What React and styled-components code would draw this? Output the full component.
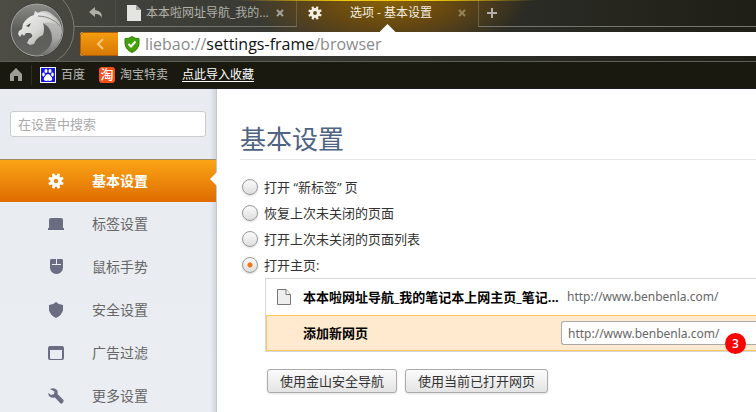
import React, { useState } from 'react';
import styled, { createGlobalStyle, css } from 'styled-components';

const GlobalStyle = createGlobalStyle`
  *, *::before, *::after { box-sizing: border-box; }
  html, body, #root { height: 100%; }
  body {
    margin: 0;
    overflow: hidden;
    background: #fff;
    color: #333;
    font: 13px/20px "Open Sans", "Noto Sans CJK SC", sans-serif;
  }
  button, input { font: inherit; color: inherit; }
  button { cursor: pointer; }
`;

const Window = styled.div`
  display: flex;
  flex-direction: column;
  min-height: 100%;
`;

/* ---------- browser frame ---------- */

const Frame = styled.header`
  display: grid;
  grid-template-columns: 80px minmax(0, 1fr);
  background:
    radial-gradient(ellipse 140px 56px at 388px 0, #876208 0%, rgba(112, 76, 12, 0.85) 45%, rgba(80, 60, 20, 0) 100%),
    linear-gradient(90deg, #4d4d46 0, #41413b 130px, #2c2d26 500px, #1e1e17 100%);
  border-bottom: 1px solid #5c5d56;
`;

const LogoButton = styled.button`
  display: block;
  padding: 0;
  border: 0;
  background: none;
  svg { display: block; }
`;

const FrameBars = styled.div`
  padding-bottom: 5px;
`;

const TabBar = styled.div`
  display: flex;
  height: 32px;
`;

const barCell = css`
  display: flex;
  align-items: center;
  height: 27px;
  border: 0;
  border-bottom: 1px solid #74756c;
  background: none;
  color: #b0b0a9;
`;

const BackButton = styled.button`
  ${barCell}
  width: 36px;
  padding: 0 0 0 8px;
  border-right: 1px solid #4b4b44;
`;

const NewTabButton = styled.button`
  ${barCell}
  flex: 1;
  padding: 0 8px;
  border-left: 1px solid #6b6243;
`;

const Tab = styled.div`
  ${barCell}
  position: relative;
  width: 181px;
  padding: 0 10px 0 11px;
  color: ${(p) => (p.$active ? '#f4efe2' : '#b0b0a9')};
  ${(p) =>
    p.$active
      ? css`
          border-bottom-color: transparent;
          &::before {
            content: '';
            position: absolute;
            inset: 0 -60px auto;
            height: 1px;
            background: linear-gradient(90deg, transparent, #f0c810 35%, #f0c810 65%, transparent);
          }
          &::after {
            content: '';
            position: absolute;
            left: 50%;
            top: 24px;
            width: 16px;
            height: 8px;
            margin-left: -8px;
            background: #fff;
            clip-path: polygon(50% 0, 100% 100%, 0 100%);
          }
        `
      : css`
          border-right: 1px solid #6b6243;
        `}
`;

const TabTitle = styled.span`
  flex: 1;
  min-width: 0;
  margin: 0 1px 0 5px;
  overflow: hidden;
  white-space: nowrap;
  font-size: 12px;
  text-align: ${(p) => (p.$centered ? 'center' : 'left')};
`;

const CloseButton = styled.button`
  display: flex;
  padding: 2px;
  border: 0;
  background: none;
  color: ${(p) => (p.$active ? '#96835a' : '#a3a39c')};
`;

const AddressBar = styled.div`
  display: flex;
  align-items: stretch;
  height: 24px;
  border-radius: 3px 0 0 3px;
  background: #fff;
  overflow: hidden;
`;

const HistoryButton = styled.button`
  display: flex;
  align-items: center;
  justify-content: center;
  width: 38px;
  padding: 0;
  border: 1px solid #a86008;
  border-right: 0;
  border-radius: 3px 0 0 3px;
  background: linear-gradient(#f39c10, #d97803);
  color: #f9c67c;
`;

const Address = styled.div`
  display: flex;
  flex: 1;
  align-items: center;
  gap: 5px;
  padding-left: 6px;
  font-size: 16px;
  line-height: 24px;
  white-space: nowrap;
  color: #8a8a8a;
  b { font-weight: 400; color: #111; }
`;

const BookmarkBar = styled.nav`
  display: flex;
  align-items: center;
  gap: 14px;
  height: 27px;
  padding-left: 9px;
  border-bottom: 1px solid #1a1a20;
  background: #191910;
  font-size: 12px;
`;

const HomeGroup = styled.div`
  display: flex;
  align-items: center;
  gap: 8px;
`;

const HomeLink = styled.a`
  display: flex;
  align-items: center;
  height: 20px;
  padding-right: 8px;
  border-right: 1px solid #2e2e27;
  color: #9d9d98;
`;

const Bookmark = styled.a`
  display: flex;
  align-items: center;
  gap: 5px;
  color: ${(p) => (p.$underlined ? '#fff' : '#b9b9b4')};
  text-decoration: ${(p) => (p.$underlined ? 'underline' : 'none')};
  text-underline-offset: 2px;
`;

/* ---------- settings page ---------- */

const Page = styled.div`
  display: grid;
  flex: 1;
  grid-template-columns: 217px minmax(0, 1fr);
`;

const Sidebar = styled.aside`
  padding-top: 22px;
  border-right: 1px solid #c3c6cb;
  background:
    linear-gradient(270deg, rgba(200, 205, 212, 0.7), rgba(220, 224, 230, 0) 6px),
    linear-gradient(#e8ebf0, #eaeef3);
`;

const SearchInput = styled.input`
  display: block;
  width: calc(100% - 20px);
  height: 26px;
  margin: 0 10px 22px;
  padding: 0 7px;
  border: 1px solid #ccc;
  border-radius: 3px;
  background: #fff;
  &::placeholder { color: #aaa; opacity: 1; }
`;

const MenuItem = styled.a`
  position: relative;
  display: flex;
  align-items: center;
  gap: 28px;
  height: 43px;
  padding-left: 48px;
  font-size: 14px;
  text-decoration: none;
  color: #666;
  svg { display: block; color: #6b6d82; }
  ${(p) =>
    p.$active &&
    css`
      border-top: 1px solid #a18a5c;
      background: linear-gradient(#fba416, #de6c00);
      color: #fff;
      font-weight: 700;
      svg { color: #fff; }
      &::after {
        content: '';
        position: absolute;
        right: -1px;
        top: 12px;
        width: 7px;
        height: 14px;
        background: #fff;
        clip-path: polygon(0 50%, 100% 0, 100% 100%);
      }
    `}
`;

const Content = styled.main`
  padding: 30px 0 0 23px;
`;

const Title = styled.h1`
  margin: 0 0 14px;
  border-bottom: 1px solid #e8e8e8;
  color: #4f6383;
  font-size: 26px;
  font-weight: 400;
  line-height: 40px;
`;

const Options = styled.fieldset`
  margin: 0;
  padding: 0 0 0 2px;
  border: 0;
  min-width: 0;
`;

const Option = styled.label`
  display: flex;
  align-items: center;
  gap: 6px;
  height: 26px;
`;

const Radio = styled.input`
  appearance: none;
  width: 16px;
  height: 16px;
  margin: 0;
  border: 1px solid #999;
  border-radius: 50%;
  background: linear-gradient(#fbfbfb, #dedede);
  box-shadow: 0 1px 2px rgba(0, 0, 0, 0.15);
  &:checked {
    background:
      radial-gradient(circle, #ee7414 2px, transparent 3px),
      linear-gradient(#fbfbfb, #dedede);
  }
`;

const PageList = styled.ul`
  margin: 0 0 0 25px;
  padding: 0;
  border: 1px solid #d8d8d8;
  border-right: 0;
  list-style: none;
`;

const PageRow = styled.li`
  display: flex;
  align-items: center;
  height: 36px;
  padding-left: 10px;
  ${(p) =>
    p.$editing &&
    css`
      border: 1px solid #fdc760;
      border-right: 0;
      padding-left: 9px;
      background: #ffe9cf;
    `}
`;

const PageIcon = styled.span`
  width: 27px;
  svg { display: block; }
`;

const PageName = styled.strong`
  width: 258px;
  overflow: hidden;
  white-space: nowrap;
  color: #000;
`;

const urlText = css`
  font-family: "Noto Sans", "Noto Sans CJK SC", sans-serif;
  font-size: 12px;
  color: #666;
`;

const PageUrl = styled.span`
  ${urlText}
  padding-left: 6px;
`;

const UrlField = styled.div`
  position: relative;
  flex: 1;
`;

const UrlInput = styled.input`
  ${urlText}
  display: block;
  width: 100%;
  height: 24px;
  padding: 0 6px;
  border: 1px solid #aaa;
  border-right: 0;
  border-radius: 3px 0 0 3px;
  background: #fff;
`;

const StepBadge = styled.span`
  position: absolute;
  left: 164px;
  top: 12px;
  width: 21px;
  height: 21px;
  border-radius: 50%;
  background: #f00;
  color: #fff;
  font-size: 12px;
  font-weight: 600;
  line-height: 21px;
  text-align: center;
`;

const Actions = styled.div`
  display: flex;
  gap: 8px;
  padding: 17px 0 0 27px;
`;

const ActionButton = styled.button`
  height: 24px;
  padding: 0 12px;
  border: 1px solid #aaa;
  border-radius: 3px;
  background: linear-gradient(#fbfbfb, #e4e4e4);
  box-shadow: 0 1px 2px rgba(0, 0, 0, 0.12);
  line-height: 22px;
  white-space: nowrap;
  color: #333;
`;

/* ---------- icons ---------- */

const LeopardLogo = () => (
  <svg width="80" height="61" viewBox="0 0 80 61" aria-hidden="true">
    <defs>
      <linearGradient id="disc" x1="0" y1="0" x2="0" y2="1">
        <stop offset="0" stopColor="#8c8c89" />
        <stop offset="0.5" stopColor="#5c5c59" />
        <stop offset="1" stopColor="#62625f" />
      </linearGradient>
      <linearGradient id="cat" x1="0" y1="0" x2="1" y2="1">
        <stop offset="0" stopColor="#f4f4f4" />
        <stop offset="0.5" stopColor="#d8d8d7" />
        <stop offset="1" stopColor="#8a8a88" />
      </linearGradient>
      <linearGradient id="mane" x1="0" y1="0" x2="0" y2="1">
        <stop offset="0" stopColor="#c9c9c7" />
        <stop offset="0.6" stopColor="#a8a8a6" />
        <stop offset="1" stopColor="#70706d" />
      </linearGradient>
    </defs>
    <path d="M63 0Q74 12 74 29Q74 50 56 61" fill="none" stroke="#7b7b74" />
    <path d="M74 26.5H80" stroke="#74756c" />
    <circle cx="37" cy="30" r="27" fill="#33332f" />
    <circle cx="37" cy="30" r="26" fill="url(#disc)" stroke="#a8a8a4" />
    <path d="M37 13Q46 8 53 15Q62 21 62 32Q61 45 48 54Q43 56 38 55Q52 49 52 38Q52 28 43 23Z" fill="url(#mane)" />
    <path
      d="M35 11L38 13Q44 11 50 15Q57 20 60 26Q51 21 43 23Q45 29 43 35Q38 37 36 40Q35 42 34 44L30 45L27 43L29 39L32 37Q33 34 30 33L26 33L24 36L22 34L20 37L18 34L19 31L22 29L23 24Q27 17 34 15Z"
      fill="url(#cat)"
    />
    <path d="M26 26L31 23L29 27Z" fill="#4a4a47" />
    <path d="M38 16Q51 16 60 26" fill="none" stroke="#858583" />
  </svg>
);

const BackArrow = () => (
  <svg width="16" height="14" viewBox="0 0 16 14" fill="currentColor" aria-hidden="true">
    <path d="M7 1L1 6L7 11V8Q12 7.500 13.500 12Q15 5 7 4Z" />
  </svg>
);

const TabPage = () => (
  <svg width="14" height="16" viewBox="0 0 14 16" aria-hidden="true">
    <path d="M0 0H9L14 5V16H0Z" fill="#e4e4e2" />
    <path d="M9 0V5H14Z" fill="#9b9b98" />
  </svg>
);

const ListPage = () => (
  <svg width="16" height="17" viewBox="0 0 16 17" aria-hidden="true">
    <path d="M1.500 0.500H10L14.500 5.500V15.500H1.500Z" fill="#eee" stroke="#777" />
    <path d="M10 0.500V5.500H14.500" fill="#fff" stroke="#777" />
  </svg>
);

const gearTeeth = [0, 45, 90, 135, 180, 225, 270, 315];

const Gear = ({ size = 16 }) => (
  <svg width={size} height={size} viewBox="0 0 16 16" fill="currentColor" aria-hidden="true">
    {gearTeeth.map((angle) => (
      <path key={angle} d="M6.500 3L6.800 0.200H9.200L9.500 3Z" transform={`rotate(${angle + 22} 8 8)`} />
    ))}
    <path fillRule="evenodd" d="M8 2.300A5.700 5.700 0 1 0 8 13.700A5.700 5.700 0 1 0 8 2.300ZM8 5.800A2.200 2.200 0 1 1 8 10.200A2.200 2.200 0 1 1 8 5.800Z" />
  </svg>
);

const Cross = () => (
  <svg width="8" height="8" viewBox="0 0 8 8" stroke="currentColor" strokeWidth="2" aria-hidden="true">
    <path d="M1 1L7 7M7 1L1 7" />
  </svg>
);

const Plus = () => (
  <svg width="10" height="10" viewBox="0 0 10 10" stroke="currentColor" strokeWidth="2" aria-hidden="true">
    <path d="M5 0V10M0 5H10" />
  </svg>
);

const Chevron = () => (
  <svg width="8" height="12" viewBox="0 0 8 12" fill="none" stroke="currentColor" strokeWidth="2" aria-hidden="true">
    <path d="M7 1L2 6L7 11" />
  </svg>
);

const SafeShield = () => (
  <svg width="16" height="17" viewBox="0 0 16 17" aria-hidden="true">
    <path d="M8 0.500Q11 3 15 2.500V8Q14 14 8 16.500Q2 14 1 8V2.500Q5 3 8 0.500Z" fill="#44a008" stroke="#328206" />
    <path d="M4.500 8L7 10.500L11.500 5.500" fill="none" stroke="#fff" strokeWidth="2" />
  </svg>
);

const House = () => (
  <svg width="14" height="14" viewBox="0 0 14 14" fill="currentColor" aria-hidden="true">
    <path d="M7 0L13 6V13H9V8H5V13H1V6Z" />
  </svg>
);

const BaiduMark = () => (
  <svg width="16" height="16" viewBox="0 0 16 16" aria-hidden="true">
    <path d="M0 0H16V16H0Z" fill="#fff" />
    <path d="M1 1H15V15H1Z" fill="#1414e8" />
    <g fill="#fff">
      <ellipse cx="6" cy="4" rx="1.500" ry="2" />
      <ellipse cx="10" cy="4" rx="1.500" ry="2" />
      <ellipse cx="3.500" cy="7.500" rx="1.300" ry="2" />
      <ellipse cx="12.500" cy="7.500" rx="1.300" ry="2" />
      <path d="M8 7Q10 7 11 9.500Q13 11 12 13Q10 14.500 8 13.500Q6 14.500 4 13Q3 11 5 9.500Q6 7 8 7Z" />
    </g>
  </svg>
);

const TaobaoMark = styled.span`
  width: 16px;
  height: 16px;
  border-radius: 3px;
  background: #f0501a;
  color: #fff;
  font-size: 13px;
  font-weight: 500;
  line-height: 15px;
  text-align: center;
`;

const TabShape = () => (
  <svg width="16" height="16" viewBox="0 0 16 16" fill="currentColor" aria-hidden="true">
    <path d="M3 2H13Q15 2 15 4V12H16V14H0V12H1V4Q1 2 3 2Z" />
  </svg>
);

const MouseShape = () => (
  <svg width="16" height="16" viewBox="0 0 16 16" fill="currentColor" aria-hidden="true">
    <path d="M3 0H8V5H4V6H13V5H9V0H14Q15 0 15 2V9Q15 12 12 14Q8.500 16 5 14Q2 12 2 9V2Q2 0 3 0Z" />
  </svg>
);

const ShieldShape = () => (
  <svg width="16" height="16" viewBox="0 0 16 16" fill="currentColor" aria-hidden="true">
    <path d="M8 0Q11 3 15 3V8Q14 13 8 16Q2 13 1 8V3Q5 3 8 0Z" />
  </svg>
);

const WindowShape = () => (
  <svg width="16" height="16" viewBox="0 0 16 16" fill="currentColor" aria-hidden="true">
    <path fillRule="evenodd" d="M2 1H14Q16 1 16 3V13Q16 15 14 15H2Q0 15 0 13V3Q0 1 2 1ZM2 5V13Q2 14 3 14H13Q14 14 14 13V5Z" />
  </svg>
);

const WrenchShape = () => (
  <svg width="16" height="16" viewBox="0 0 16 16" fill="currentColor" aria-hidden="true">
    <path d="M2 1Q6 -1 9 2Q10 4 9.500 6L15.500 12Q16 14 14 15.500Q13 16 12 15L7 9.500Q3 10.500 1 8Q0 6 0.500 5L3 7L6 6L6.500 3.500Z" />
  </svg>
);

/* ---------- data ---------- */

const menu = [
  { label: '基本设置', Icon: Gear },
  { label: '标签设置', Icon: TabShape },
  { label: '鼠标手势', Icon: MouseShape },
  { label: '安全设置', Icon: ShieldShape },
  { label: '广告过滤', Icon: WindowShape },
  { label: '更多设置', Icon: WrenchShape },
];

const startupOptions = ['打开 “新标签” 页', '恢复上次未关闭的页面', '打开上次未关闭的页面列表', '打开主页:'];

export default function App() {
  const [section, setSection] = useState(0);
  const [startup, setStartup] = useState(3);
  const [url, setUrl] = useState('http://www.benbenla.com/');

  return (
    <Window>
      <GlobalStyle />
      <Frame>
        <LogoButton aria-label="猎豹浏览器">
          <LeopardLogo />
        </LogoButton>
        <FrameBars>
          <TabBar>
            <BackButton aria-label="恢复标签"><BackArrow /></BackButton>
            <Tab>
              <TabPage />
              <TabTitle>本本啦网址导航_我的...</TabTitle>
              <CloseButton aria-label="关闭"><Cross /></CloseButton>
            </Tab>
            <Tab $active>
              <Gear size={14} />
              <TabTitle $centered>选项 - 基本设置</TabTitle>
              <CloseButton $active aria-label="关闭"><Cross /></CloseButton>
            </Tab>
            <NewTabButton aria-label="新建标签"><Plus /></NewTabButton>
          </TabBar>
          <AddressBar>
            <HistoryButton aria-label="后退"><Chevron /></HistoryButton>
            <Address>
              <SafeShield />
              <span>liebao://<b>settings-frame</b>/browser</span>
            </Address>
          </AddressBar>
        </FrameBars>
      </Frame>
      <BookmarkBar>
        <HomeGroup>
          <HomeLink href="#home" aria-label="主页"><House /></HomeLink>
          <Bookmark href="#baidu"><BaiduMark />百度</Bookmark>
        </HomeGroup>
        <Bookmark href="#taobao"><TaobaoMark>淘</TaobaoMark>淘宝特卖</Bookmark>
        <Bookmark href="#import" $underlined>点此导入收藏</Bookmark>
      </BookmarkBar>
      <Page>
        <Sidebar>
          <SearchInput type="search" placeholder="在设置中搜索" aria-label="在设置中搜索" />
          <nav>
            {menu.map(({ label, Icon }, i) => (
              <MenuItem key={label} href="#settings" $active={i === section} onClick={() => setSection(i)}>
                <Icon />
                {label}
              </MenuItem>
            ))}
          </nav>
        </Sidebar>
        <Content>
          <Title>基本设置</Title>
          <Options aria-label="启动时">
            {startupOptions.map((label, i) => (
              <Option key={label}>
                <Radio type="radio" name="startup" checked={i === startup} onChange={() => setStartup(i)} />
                {label}
              </Option>
            ))}
          </Options>
          <PageList>
            <PageRow>
              <PageIcon><ListPage /></PageIcon>
              <PageName>本本啦网址导航_我的笔记本上网主页_笔记...</PageName>
              <PageUrl>http://www.benbenla.com/</PageUrl>
            </PageRow>
            <PageRow $editing>
              <PageIcon />
              <PageName as="label" htmlFor="new-page"><strong>添加新网页</strong></PageName>
              <UrlField>
                <UrlInput id="new-page" value={url} onChange={(e) => setUrl(e.target.value)} />
                <StepBadge>3</StepBadge>
              </UrlField>
            </PageRow>
          </PageList>
          <Actions>
            <ActionButton>使用金山安全导航</ActionButton>
            <ActionButton>使用当前已打开网页</ActionButton>
          </Actions>
        </Content>
      </Page>
    </Window>
  );
}
